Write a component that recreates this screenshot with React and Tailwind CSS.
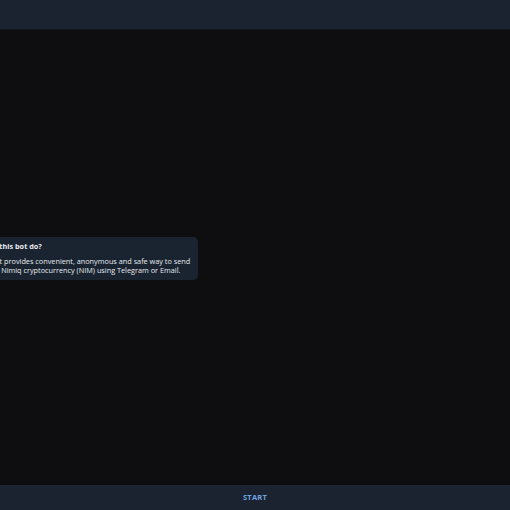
export default function App() {
  return (
    <div className="flex h-[510px] w-[510px] flex-col overflow-hidden bg-[#0e0e10] font-['Open_Sans',sans-serif]">
      {/* top bar */}
      <div className="h-[30px] shrink-0 border-b border-[#11161d] bg-[#1b2230]" />

      {/* chat area */}
      <div className="flex flex-1 flex-col justify-center overflow-hidden">
        <div className="ml-[-36px] mt-[2px] w-[234px] rounded-[5px] bg-[#1a2431] pb-[5px] pl-[11px] pr-[6px] pt-[5px] text-[7.3px] leading-[9px] text-[#e6eaee]">
          <div className="mb-[6px] ml-[-16px] whitespace-nowrap font-bold">What does this bot do?</div>
          <div className="whitespace-nowrap">This bot provides convenient, anonymous and safe way to send</div>
          <div className="whitespace-nowrap">receive Nimiq cryptocurrency (NIM) using Telegram or Email.</div>
        </div>
      </div>

      {/* bottom button */}
      <div className="flex h-[26px] shrink-0 items-center justify-center border-t border-[#0a0c10] bg-[#1b2230]">
        <span className="text-[7.5px] font-bold tracking-[0.2px] text-[#6ea6e0]">START</span>
      </div>
    </div>
  );
}
